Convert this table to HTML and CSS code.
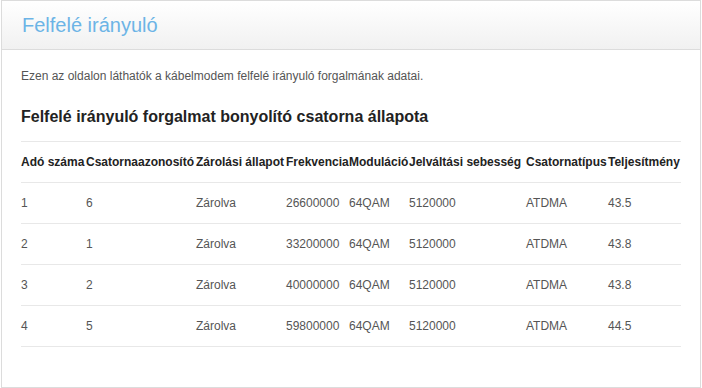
FILE: index.html
```html
<!DOCTYPE html>
<html lang="hu">
<head>
<meta charset="utf-8">
<title>Felfelé irányuló</title>
<link rel="stylesheet" href="styles.css">
</head>
<body>
<div class="panel">
  <div class="panel-head">
    <h1 class="title">Felfelé irányuló</h1>
  </div>
  <div class="panel-body">
    <p class="desc">Ezen az oldalon láthatók a kábelmodem felfelé irányuló forgalmának adatai.</p>
    <h2 class="subtitle">Felfelé irányuló forgalmat bonyolító csatorna állapota</h2>
    <table class="grid">
      <colgroup>
        <col class="c1"><col class="c2"><col class="c3"><col class="c4"><col class="c5"><col class="c6"><col class="c7"><col class="c8">
      </colgroup>
      <thead>
        <tr>
          <th>Adó száma</th><th>Csatornaazonosító</th><th>Zárolási állapot</th><th>Frekvencia</th><th>Moduláció</th><th>Jelváltási sebesség</th><th>Csatornatípus</th><th>Teljesítmény</th>
        </tr>
      </thead>
      <tbody>
        <tr><td>1</td><td>6</td><td>Zárolva</td><td>26600000</td><td>64QAM</td><td>5120000</td><td>ATDMA</td><td>43.5</td></tr>
        <tr><td>2</td><td>1</td><td>Zárolva</td><td>33200000</td><td>64QAM</td><td>5120000</td><td>ATDMA</td><td>43.8</td></tr>
        <tr><td>3</td><td>2</td><td>Zárolva</td><td>40000000</td><td>64QAM</td><td>5120000</td><td>ATDMA</td><td>43.8</td></tr>
        <tr><td>4</td><td>5</td><td>Zárolva</td><td>59800000</td><td>64QAM</td><td>5120000</td><td>ATDMA</td><td>44.5</td></tr>
      </tbody>
    </table>
  </div>
</div>
</body>
</html>
```
FILE: styles.css
```css
html, body {
  margin: 0;
  padding: 0;
  background: #fff;
}
body {
  font-family: "Liberation Sans", Arial, sans-serif;
  color: #555;
  font-size: 12px;
}
.panel {
  margin-left: 1px;
  width: 698px;
  height: 386px;
  border: 1px solid #dcdcdc;
  background: #fff;
}
.panel-head {
  height: 48px;
  border-bottom: 1px solid #dcdcdc;
  background: linear-gradient(to bottom, #ffffff 0%, #f1f1f1 100%);
  padding-left: 20px;
  display: flex;
  align-items: center;
}
.title {
  margin: 0;
  font-size: 20px;
  font-weight: normal;
  color: #6cb4e6;
}
.panel-body {
  padding: 0 19px 0 19px;
}
.desc {
  margin: 0;
  padding-top: 19px;
  line-height: 14px;
}
.subtitle {
  margin: 24px 0 0;
  font-size: 16px;
  line-height: 20px;
  font-weight: bold;
  color: #222;
}
.grid {
  margin-top: 14px;
  width: 660px;
  border-collapse: collapse;
  table-layout: fixed;
}
.c1 { width: 65px; }
.c2 { width: 110px; }
.c3 { width: 90px; }
.c4 { width: 63px; }
.c5 { width: 60px; }
.c6 { width: 117px; }
.c7 { width: 82px; }
.c8 { width: 73px; }
.grid th,
.grid td {
  height: 40px;
  padding: 0;
  text-align: left;
  vertical-align: middle;
  border-top: 1px solid #e8e8e8;
  white-space: nowrap;
}
.grid tbody tr:last-child td {
  border-bottom: 1px solid #e8e8e8;
}
.grid th {
  font-weight: bold;
  color: #222;
}
```
